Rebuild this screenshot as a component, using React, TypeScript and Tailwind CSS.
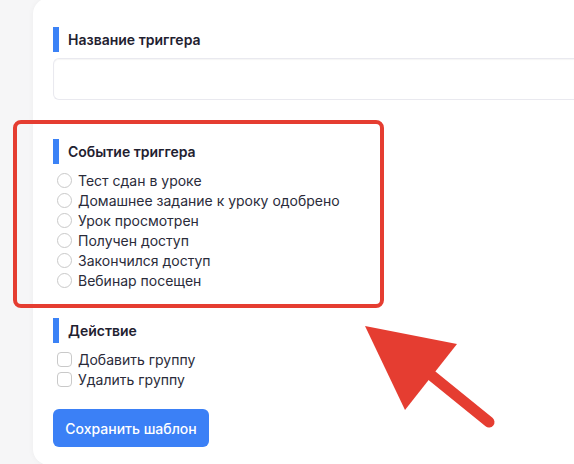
import React from "react";

const events = [
  "Тест сдан в уроке",
  "Домашнее задание к уроку одобрено",
  "Урок просмотрен",
  "Получен доступ",
  "Закончился доступ",
  "Вебинар посещен",
];

const actions = ["Добавить группу", "Удалить группу"];

const SectionTitle = ({ text }: { text: string }) => (
  <div className="flex items-center h-[25px]">
    <div className="w-[6px] h-[25px] bg-[#3b82f6]" />
    <span className="ml-[9px] text-[14px] font-semibold text-[#1f2130]">{text}</span>
  </div>
);

export default function App() {
  return (
    <div className="relative h-[464px] overflow-hidden bg-[#f6f6f7] pl-[33px] font-['Inter',sans-serif]">
      <div className="mt-[-2px] h-[467px] rounded-l-2xl bg-white pl-[20px] pt-[29px] shadow-[0_0_6px_rgba(0,0,0,0.04)]">
        <SectionTitle text="Название триггера" />
        <div className="mt-[6px] h-[42px] rounded-l-md border border-r-0 border-[#e9e9ef] shadow-[inset_0_1px_1px_rgba(0,0,0,0.04)]" />

        <div className="mt-[39px]">
          <SectionTitle text="Событие триггера" />
          <div className="mt-[6px] flex flex-col">
            {events.map((e) => (
              <label key={e} className="flex items-center h-[20px] text-[14px] text-[#2a2b3a]">
                <span className="ml-[4px] w-[15px] h-[15px] rounded-full border border-[#c9c9c9] bg-white" />
                <span className="ml-[6px]">{e}</span>
              </label>
            ))}
          </div>
        </div>

        <div className="mt-[28px]">
          <SectionTitle text="Действие" />
          <div className="mt-[6px] flex flex-col">
            {actions.map((a) => (
              <label key={a} className="flex items-center h-[20px] text-[14px] text-[#2a2b3a]">
                <span className="ml-[4px] w-[15px] h-[15px] rounded-[4px] border border-[#c9c9c9] bg-white" />
                <span className="ml-[6px]">{a}</span>
              </label>
            ))}
          </div>
        </div>

        <button className="mt-[20px] w-[156px] h-[38px] rounded-md bg-[#3b80f6] text-white text-[14px] font-medium">
          Сохранить шаблон
        </button>
      </div>

      {/* highlight frame */}
      <div className="absolute left-[13px] top-[120px] w-[371px] h-[188px] rounded-[8px] border-[4px] border-[#e53d31]" />

      {/* pointer arrow */}
      <svg className="absolute left-0 top-0" width="574" height="464" viewBox="0 0 574 464">
        <line x1="415" y1="362" x2="489" y2="422" stroke="#e53d31" strokeWidth="11" strokeLinecap="round" />
        <polygon points="365,326 457,344 405,410" fill="#e53d31" />
      </svg>
    </div>
  );
}
